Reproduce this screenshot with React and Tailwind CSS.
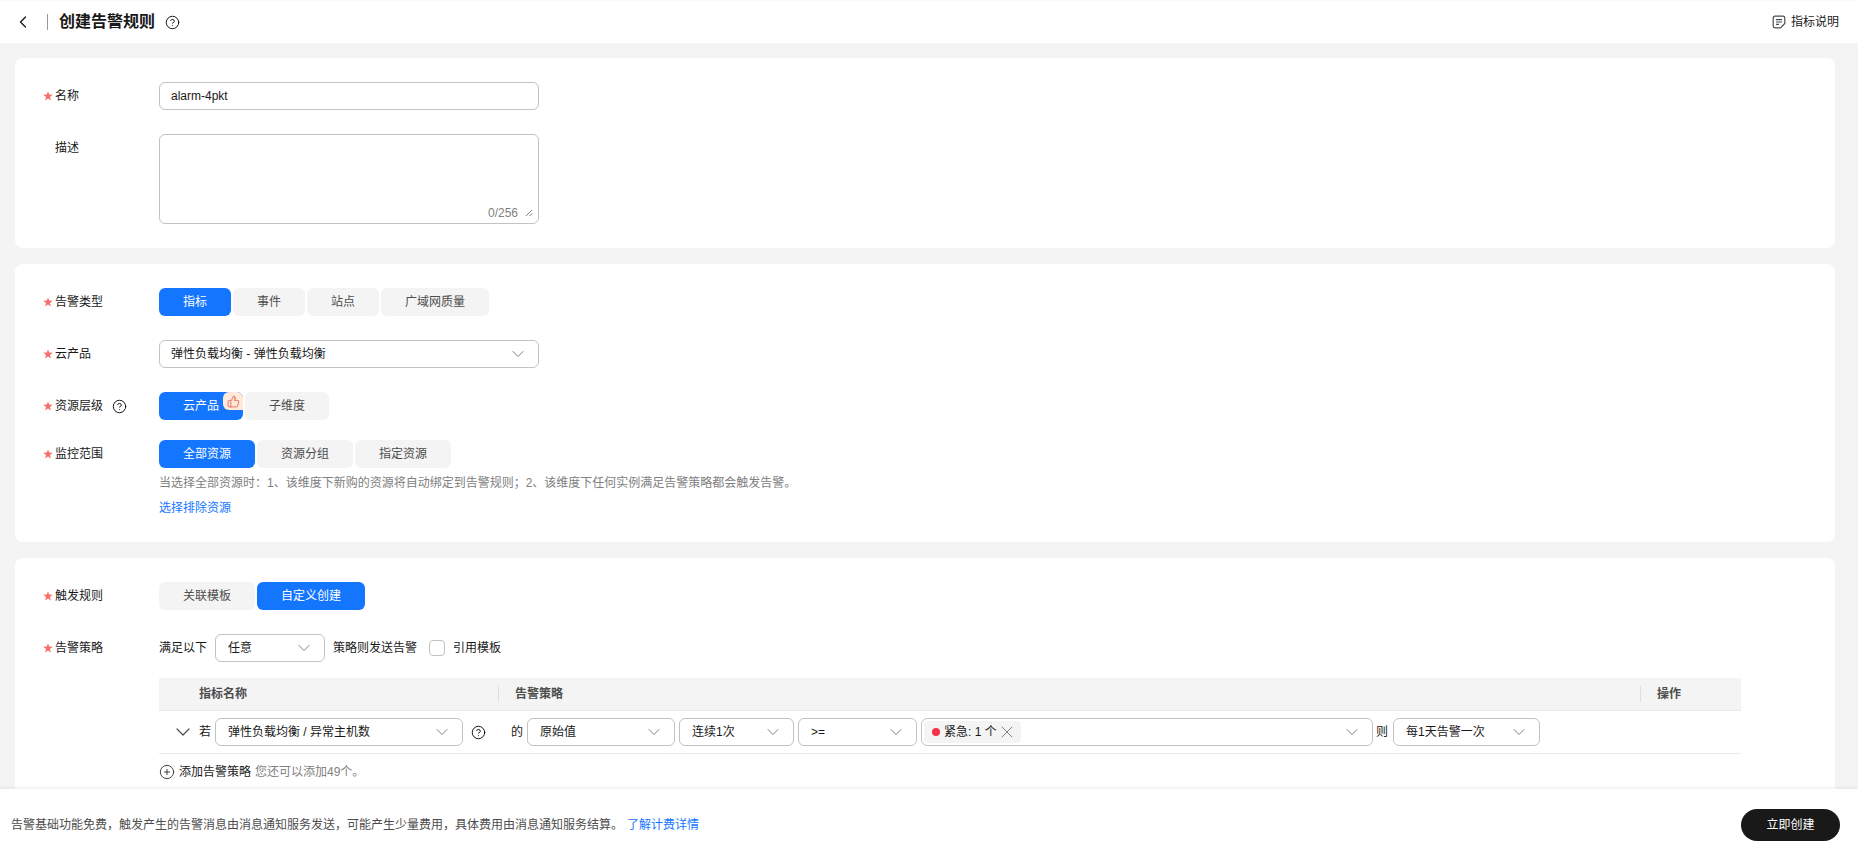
import { ChevronLeft, ChevronDown, CircleHelp, CirclePlus, X, ThumbsUp } from 'lucide-react';

const font = { fontFamily: '"Liberation Sans", "Noto Sans CJK SC", sans-serif' };

const Star = () => (
  <svg width="10" height="10" viewBox="0 0 10 10" className="mr-[2px] shrink-0">
    <path
      d="M5 .3 6.2 3.6 9.8 3.7 6.9 5.9 8 9.6 5 7.4 2 9.6 3.1 5.9.2 3.7 3.8 3.6Z"
      fill="#f66f6a"
    />
  </svg>
);

const FormRow = ({ label, required = true, help, top = 'items-center', className = '', children }) => (
  <div className={`flex ${className}`}>
    <div className={`w-[116px] h-7 shrink-0 flex ${top} text-[#191919]`}>
      {required ? <Star /> : <span className="w-[12px] shrink-0" />}
      <span>{label}</span>
      {help && <CircleHelp size={15} strokeWidth={1.6} className="ml-[9px] text-[#191919]" />}
    </div>
    <div className="flex-1 min-w-0">{children}</div>
  </div>
);

const Seg = ({ label, active, width, badge }) => (
  <button
    className={`relative h-7 rounded-md text-xs flex items-center justify-center ${width} ${
      active ? 'bg-[#1476ff] text-white' : 'bg-[#f4f4f4] text-[#4d4d4d]'
    }`}
  >
    {label}
    {badge && (
      <span className="absolute top-0 right-0 w-5 h-[18px] bg-[#ffe9d9] rounded-l-md rounded-tr-md flex items-center justify-center">
        <ThumbsUp size={13} strokeWidth={1.5} className="text-[#e8564f]" />
      </span>
    )}
  </button>
);

const Select = ({ value, width, children }) => (
  <div
    className={`h-7 shrink-0 border border-[#c2c2c2] rounded-md bg-white flex items-center justify-between pl-3 pr-[10px] text-xs text-[#191919] ${width}`}
  >
    {children || <span>{value}</span>}
    <ChevronDown size={20} strokeWidth={1.2} className="text-[#808080] shrink-0" />
  </div>
);

export default function App() {
  return (
    <div style={font} className="relative h-screen overflow-hidden bg-[#f4f4f4] text-xs">
      {/* Header */}
      <div className="h-[43px] bg-white flex items-center justify-between pl-[13px] pr-[11px] border-t border-[#fafafa]">
        <div className="flex items-center">
          <ChevronLeft size={20} strokeWidth={1.6} className="text-[#191919]" />
          <span className="w-px h-4 bg-[#999] ml-[14px] mr-[11px]" />
          <h1 className="text-base font-bold text-[#191919] leading-none">创建告警规则</h1>
          <CircleHelp size={15} strokeWidth={1.6} className="ml-[10px] text-[#191919]" />
        </div>
        <div className="flex items-center text-[#191919]">
          <svg width="14" height="14" viewBox="0 0 14 14" fill="none" stroke="#4d4d4d" strokeWidth="1.2" className="mr-[5px]">
            <path d="M8.5 12.8H3a1.8 1.8 0 0 1-1.8-1.8V3A1.8 1.8 0 0 1 3 1.2h8A1.8 1.8 0 0 1 12.8 3v5.5Z" />
            <path d="M4 4.6h6M4 7h6M4 9.4h3" />
          </svg>
          <span className="mr-[8px]">指标说明</span>
        </div>
      </div>

      <div className="pl-[15px] pr-[23px] pt-[15px] flex flex-col gap-4">
        {/* Basic info */}
        <section className="bg-white rounded-lg pl-[28px] pt-6 pb-6 flex flex-col gap-6">
          <FormRow label="名称">
            <div className="w-[380px] h-7 border border-[#c2c2c2] rounded-md flex items-center px-[11px] text-[#191919]">
              alarm-4pkt
            </div>
          </FormRow>
          <FormRow label="描述" required={false}>
            <div className="relative w-[380px] h-[90px] border border-[#c2c2c2] rounded-md">
              <div className="absolute right-[5px] bottom-[2px] flex items-center gap-[7px] text-[#808080]">
                <span>0/256</span>
                <svg width="8" height="8" viewBox="0 0 8 8" fill="none" stroke="#808080" strokeWidth="1">
                  <path d="M1 7 7 1M4.5 7 7 4.5" />
                </svg>
              </div>
            </div>
          </FormRow>
        </section>

        {/* Alarm target */}
        <section className="bg-white rounded-lg pl-[28px] pt-6 pb-[27px] flex flex-col gap-6">
          <FormRow label="告警类型">
            <div className="flex gap-0.5">
              <Seg label="指标" active width="w-[72px]" />
              <Seg label="事件" width="w-[72px]" />
              <Seg label="站点" width="w-[72px]" />
              <Seg label="广域网质量" width="w-[108px]" />
            </div>
          </FormRow>
          <FormRow label="云产品">
            <Select value="弹性负载均衡 - 弹性负载均衡" width="w-[380px] !pl-[11px]" />
          </FormRow>
          <FormRow label="资源层级" help>
            <div className="flex gap-0.5">
              <Seg label="云产品" active width="w-[84px]" badge />
              <Seg label="子维度" width="w-[84px]" />
            </div>
          </FormRow>
          <FormRow label="监控范围" className="-mt-1">
            <div className="flex gap-0.5">
              <Seg label="全部资源" active width="w-[96px]" />
              <Seg label="资源分组" width="w-[96px]" />
              <Seg label="指定资源" width="w-[96px]" />
            </div>
            <p className="mt-2 leading-[14px] text-[#808080]">
              当选择全部资源时：1、该维度下新购的资源将自动绑定到告警规则；2、该维度下任何实例满足告警策略都会触发告警。
            </p>
            <a className="block mt-[11px] leading-[14px] text-[#1476ff]">选择排除资源</a>
          </FormRow>
        </section>

        {/* Trigger rule */}
        <section className="bg-white rounded-lg pl-[28px] pt-6 pb-6 flex flex-col gap-6">
          <FormRow label="触发规则">
            <div className="flex gap-0.5">
              <Seg label="关联模板" width="w-[96px]" />
              <Seg label="自定义创建" active width="w-[108px]" />
            </div>
          </FormRow>
          <FormRow label="告警策略">
            <div className="flex items-center h-7 text-[#191919]">
              <span>满足以下</span>
              <Select value="任意" width="w-[110px] ml-2" />
              <span className="ml-2">策略则发送告警</span>
              <span className="w-4 h-4 ml-3 rounded border border-[#c2c2c2]" />
              <span className="ml-2">引用模板</span>
            </div>

            <div className="mt-4 w-[1582px]">
              <div className="h-8 bg-[#f4f4f4] flex items-center text-[#4d4d4d] font-bold">
                <span className="w-[339px] pl-10">指标名称</span>
                <span className="w-px h-4 bg-[#dfdfdf]" />
                <span className="w-[1141px] pl-4">告警策略</span>
                <span className="w-px h-4 bg-[#dfdfdf]" />
                <span className="pl-4">操作</span>
              </div>
              <div className="h-[44px] border-y border-[#ebebeb] flex items-center text-[#191919]">
                <ChevronDown size={24} strokeWidth={1.2} className="ml-[12px] text-[#4d4d4d]" />
                <span className="ml-[4px]">若</span>
                <Select value="弹性负载均衡 / 异常主机数" width="w-[248px] ml-1" />
                <CircleHelp size={15} strokeWidth={1.6} className="ml-2" />
                <span className="ml-[25px]">的</span>
                <Select value="原始值" width="w-[148px] ml-1" />
                <Select value="连续1次" width="w-[115px] ml-1" />
                <Select value=">=" width="w-[119px] ml-1" />
                <Select width="w-[452px] ml-1 !pl-[2px]">
                  <span className="h-[22px] bg-[#f4f4f4] rounded flex items-center pl-2 pr-1">
                    <span className="w-2 h-2 rounded-full bg-[#f43146] mr-1" />
                    紧急: 1 个
                    <X size={20} strokeWidth={1.2} className="text-[#808080]" />
                  </span>
                </Select>
                <span className="ml-[3px]">则</span>
                <Select value="每1天告警一次" width="w-[147px] ml-[5px]" />
              </div>
              <div className="mt-[10px] flex items-center h-4">
                <CirclePlus size={16} strokeWidth={1.2} className="text-[#191919]" />
                <span className="ml-[4px] text-[#191919]">添加告警策略</span>
                <span className="ml-1 text-[#808080]">您还可以添加49个。</span>
              </div>
            </div>
          </FormRow>
        </section>
      </div>

      {/* Footer */}
      <div className="absolute left-0 right-0 bottom-0 h-16 pt-2 bg-white shadow-[0_-1px_4px_rgba(0,0,0,0.08)] flex items-center justify-between pl-[11px] pr-[18px]">
        <p className="text-[#4d4d4d]">
          告警基础功能免费，触发产生的告警消息由消息通知服务发送，可能产生少量费用，具体费用由消息通知服务结算。
          <a className="ml-[4px] text-[#1476ff]">了解计费详情</a>
        </p>
        <button className="w-[99px] h-8 rounded-full bg-[#191919] text-white">立即创建</button>
      </div>
    </div>
  );
}
